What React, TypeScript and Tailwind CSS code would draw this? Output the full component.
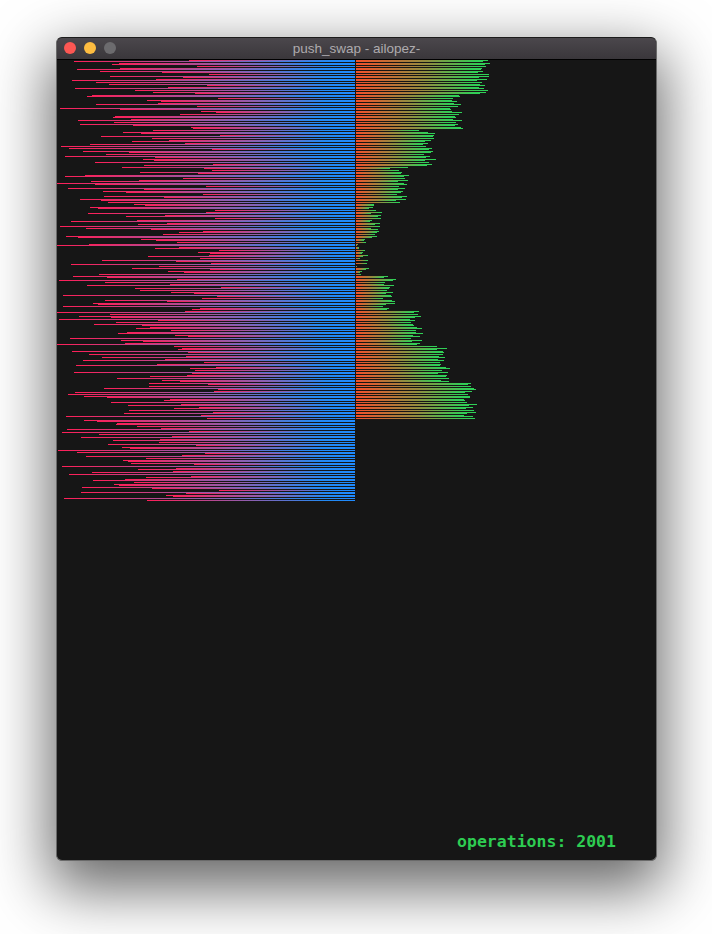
// x where each stack A bar starts, one per row, top to bottom
const stackA = [
  189, 74, 119, 112, 197, 120, 77, 100, 162, 209, 110, 183, 156, 72, 96, 109, 207, 168, 75, 135, 153, 195, 92, 87,
  218, 147, 161, 158, 96, 197, 60, 120, 201, 216, 180, 115, 113, 131, 78, 114, 80, 133, 191, 193, 153, 123, 141, 220,
  101, 152, 169, 132, 185, 90, 61, 69, 212, 83, 129, 106, 65, 155, 143, 154, 95, 213, 144, 122, 204, 212, 140, 198,
  85, 65, 183, 139, 91, 57, 95, 206, 68, 144, 103, 126, 203, 104, 164, 80, 101, 108, 134, 145, 90, 98,
  215, 206, 88, 165, 126, 215, 137, 71, 167, 138, 60, 86, 151, 203, 179, 163, 66, 78, 141, 156, 177, 89, 57, 179,
  155, 219, 198, 210, 209, 148, 200, 102, 176, 211, 71, 159, 132, 210, 168, 184, 99, 73, 107, 177, 59, 105, 170, 87,
  221, 135, 140, 171, 194, 63, 217, 202, 105, 167, 93, 98, 63, 200, 192, 185, 56, 110, 79, 111, 59, 158, 116, 94,
  142, 150, 136, 171, 127, 118, 175, 188, 70, 121, 143, 125, 56, 174, 182, 178, 72, 188, 89, 186, 102, 165,
  83, 204, 157, 76, 216, 190, 195, 74, 192, 187, 150, 117, 162, 180, 149, 208, 149, 104, 218, 214, 75, 68, 84, 107,
  170, 164, 111, 181, 128, 199, 174, 129, 213, 124, 201, 66, 207, 84, 97, 117, 116, 137, 161, 67, 189, 62, 99, 172,
  81, 160, 113, 159, 108, 196, 122, 130, 58, 77, 205, 182, 86, 146, 123, 128, 131, 194, 62, 176, 138, 173, 92, 69,
  191, 146, 125, 93, 134, 114, 119, 82, 152, 219, 81, 186, 166, 173, 64, 147,
]

// x where each stack B bar ends
const stackB = [
  488, 483, 490, 485, 486, 482, 481, 483, 478, 489, 489, 479, 487, 477, 482, 480, 485, 479, 484, 488, 486, 480,
  459, 460, 453, 452, 457, 454, 461, 458, 450, 451, 452, 462, 459, 455, 456, 453, 462, 456, 458, 455, 461, 463,
  419, 428, 435, 434, 433, 434, 431, 425, 428, 423, 426, 432, 429, 433, 431, 424, 430, 426, 436, 425, 429, 432, 427,
  408, 390, 399, 402, 401, 409, 404, 405, 408, 398, 404, 407, 399, 405, 398, 403, 401, 397, 407, 402, 406, 396, 400,
  374, 374, 373, 369, 376, 382, 371, 381, 378, 381, 372, 370, 380, 375, 380, 371, 378, 379, 377, 375, 377, 372,
  365, 364, 366, 358, 357, 359, 359, 365, 363, 362, 368, 363, 360, 368, 356, 367, 356, 357, 369, 366, 362, 360, 361,
  388, 384, 396, 393, 385, 384, 394, 390, 389, 387, 393, 386, 391, 392, 383, 392, 395, 395, 386, 383, 389, 387,
  419, 414, 418, 421, 415, 410, 415, 411, 413, 414, 417, 422, 416, 416, 423, 413, 420, 411, 422, 412, 420, 417,
  437, 447, 437, 443, 444, 443, 439, 445, 438, 444, 440, 441, 440, 446, 450, 442, 448, 438, 447, 446, 449, 441, 449,
  471, 468, 471, 474, 476, 472, 465, 468, 470, 470, 464, 465, 467, 477, 469, 473, 466, 474, 476, 467, 464, 473, 475,
]

const rowY = (i: number) => 60 + Math.floor(i * 1.6)

function Chart() {
  return (
    <svg className="block w-full h-[441px]" viewBox="57 60 599 441" shapeRendering="crispEdges">
      <defs>
        <linearGradient id="stack-a">
          <stop offset="0" stopColor="#ff1f58" />
          <stop offset="0.5" stopColor="#8d5fb0" />
          <stop offset="0.85" stopColor="#2389f2" />
          <stop offset="1" stopColor="#1f8bff" />
        </linearGradient>
        <linearGradient id="stack-b">
          <stop offset="0" stopColor="#f4512a" />
          <stop offset="0.55" stopColor="#8f8f40" />
          <stop offset="0.92" stopColor="#33cc55" />
          <stop offset="1" stopColor="#2fd257" />
        </linearGradient>
      </defs>
      {stackA.map((x, i) => (
        <rect key={i} x={x} y={rowY(i)} width={355 - x} height={1} fill="url(#stack-a)" />
      ))}
      {stackB.map((x, i) => (
        <rect key={i} x={356} y={rowY(i)} width={x - 356} height={1} fill="url(#stack-b)" />
      ))}
    </svg>
  )
}

export default function App() {
  return (
    <div className="min-h-[934px] bg-white pt-[37px] pl-[56px] overflow-hidden">
      <div className="flex flex-col w-[601px] h-[824px] rounded-[6px] overflow-hidden border border-[#6a6a6a] border-t-[#1c1c1c] bg-[#161616] shadow-[0_22px_60px_6px_rgba(0,0,0,0.6)]">
        {/* TITLE BAR */}
        <div className="relative flex items-center justify-center h-[22px] shrink-0 border-b border-black bg-gradient-to-b from-[#4b474c] to-[#3a373b]">
          <div className="absolute left-[7px] top-[4px] flex gap-2">
            <span className="w-3 h-3 rounded-full bg-[#fc5753]" />
            <span className="w-3 h-3 rounded-full bg-[#fdbc40]" />
            <span className="w-3 h-3 rounded-full bg-[#6c6b6e]" />
          </div>
          <span className="text-[13.5px] leading-none text-[#aeabae] font-['Liberation_Sans',sans-serif]">
            push_swap - ailopez-
          </span>
        </div>

        {/* STACKS */}
        <Chart />

        {/* COUNTER */}
        <div className="mt-auto flex justify-end pr-10 pb-2">
          <span className="text-[16.5px] leading-5 font-bold text-[#2ecc52] font-['DejaVu_Sans_Mono',monospace]">
            operations: 2001
          </span>
        </div>
      </div>
    </div>
  )
}
